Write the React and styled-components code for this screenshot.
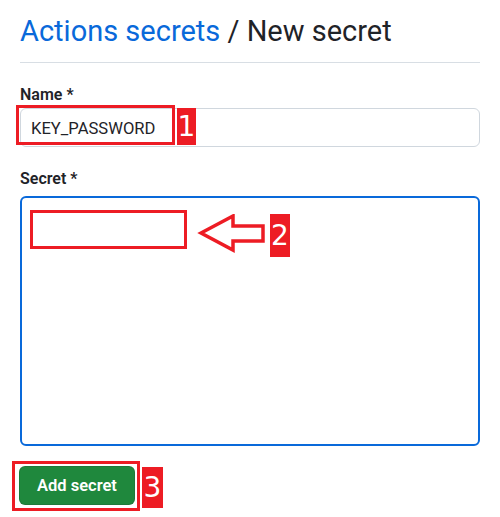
import React from "react";
import styled, { createGlobalStyle } from "styled-components";

const GlobalStyle = createGlobalStyle`
  html, body {
    margin: 0;
    padding: 0;
    background: #ffffff;
  }
  body {
    font-family: Roboto, "Noto Sans", "Liberation Sans", sans-serif;
    color: #1f2328;
  }
`;

const Page = styled.div`
  width: 500px;
  min-height: 517px;
  padding: 13px 20px 0 20px;
  box-sizing: border-box;
  display: flex;
  flex-direction: column;
`;

const Header = styled.h2`
  margin: 0;
  padding-bottom: 13px;
  border-bottom: 1px solid #d8dee4;
  font-size: 29px;
  line-height: 36px;
  font-weight: 400;
  color: #1f2328;
`;

const Crumb = styled.a`
  color: #0969da;
  text-decoration: none;
`;

const Field = styled.div`
  display: flex;
  flex-direction: column;
  gap: ${(p) => p.$gap}px;
  margin-top: 22px;
`;

const Label = styled.label`
  font-size: 16px;
  line-height: 20px;
  font-weight: 600;
  color: #1f2328;
`;

const Anchor = styled.div`
  position: relative;
`;

const TextInput = styled.input`
  display: block;
  width: 100%;
  height: 39px;
  box-sizing: border-box;
  padding: 1px 10px 0 10px;
  border: 1px solid #d0d7de;
  border-radius: 6px;
  font-family: Roboto, "Noto Sans", sans-serif;
  font-size: 16.6px;
  color: #1f2328;
  background: #ffffff;
  outline: none;
`;

const TextArea = styled.textarea`
  display: block;
  width: 100%;
  height: 250px;
  box-sizing: border-box;
  border: 2px solid #0969da;
  border-radius: 6px;
  padding: 8px;
  resize: none;
  font-family: Roboto, "Noto Sans", sans-serif;
  font-size: 16px;
  background: #ffffff;
  outline: none;
`;

const Actions = styled.div`
  position: relative;
  margin-top: 20px;
  display: flex;
`;

const SubmitButton = styled.button`
  height: 39px;
  margin-left: -1px;
  padding: 0 17px;
  border: 1px solid rgba(31, 35, 40, 0.15);
  border-radius: 6px;
  background: #1f883d;
  color: #ffffff;
  font-family: Roboto, "Noto Sans", sans-serif;
  font-size: 16.5px;
  font-weight: 600;
  cursor: pointer;
`;

/* red annotation callouts drawn over the form */
const Callout = styled.div`
  position: absolute;
  left: ${(p) => p.$x}px;
  top: ${(p) => p.$y}px;
  display: flex;
  align-items: flex-start;
  gap: ${(p) => p.$gap}px;
  pointer-events: none;
`;

const Frame = styled.div`
  box-sizing: border-box;
  border: 3px solid #ed1c24;
  width: ${(p) => p.$w}px;
  height: ${(p) => p.$h}px;
`;

const Tag = styled.div`
  width: ${(p) => p.$w}px;
  height: ${(p) => p.$h}px;
  margin-top: ${(p) => p.$dy}px;
  background: #ed1c24;
  color: #ffffff;
  font-family: "DejaVu Sans", "Liberation Sans", sans-serif;
  font-size: 28px;
  line-height: ${(p) => p.$h}px;
  text-align: center;
`;

const Arrow = styled.svg`
  margin-top: 4px;
  flex: none;
`;

export default function App() {
  return (
    <>
      <GlobalStyle />
      <Page>
        <Header>
          <Crumb href="#">Actions secrets</Crumb> / New secret
        </Header>

        <Field $gap={3}>
          <Label>Name *</Label>
          <Anchor>
            <TextInput defaultValue="KEY_PASSWORD" />
            <Callout $x={-4} $y={-3} $gap={2}>
              <Frame $w={159} $h={40} />
              <Tag $w={19} $h={37} $dy={3}>1</Tag>
            </Callout>
          </Anchor>
        </Field>

        <Field $gap={7}>
          <Label>Secret *</Label>
          <Anchor>
            <TextArea />
            <Callout $x={10} $y={14} $gap={0}>
              <Frame $w={157} $h={39} />
              <Arrow width="83" height="40" viewBox="0 0 83 40">
                <path
                  d="M14 19 L46 2 L46 12 L76 12 L76 27 L46 27 L46 36 Z"
                  fill="#ffffff"
                  stroke="#ed1c24"
                  strokeWidth="3.5"
                />
              </Arrow>
              <Tag $w={20} $h={43} $dy={4}>2</Tag>
            </Callout>
          </Anchor>
        </Field>

        <Actions>
          <SubmitButton type="button">Add secret</SubmitButton>
          <Callout $x={-8} $y={-5} $gap={2}>
            <Frame $w={128} $h={50} />
            <Tag $w={21} $h={41} $dy={6}>3</Tag>
          </Callout>
        </Actions>
      </Page>
    </>
  );
}
